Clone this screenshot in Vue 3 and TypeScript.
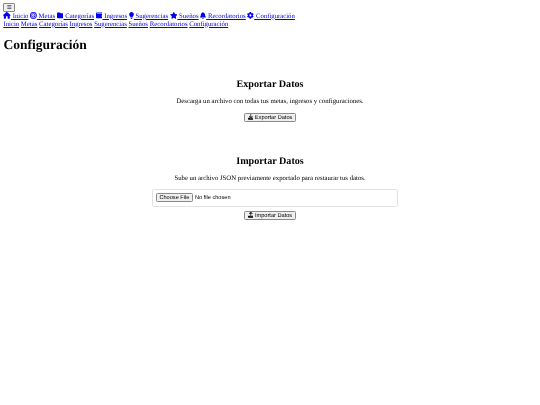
<script setup lang="ts">
interface NavItem { label: string; d: string; box: string }
const nav: NavItem[] = [
  { label: 'Inicio', box: '0 0 576 512', d: 'M575.8 255.5c0 18-15 32.1-32 32.1h-32l.7 160.2c0 2.7-.2 5.4-.5 8.1V472c0 22.1-17.9 40-40 40H456c-1.100 0-2.200 0-3.300-.1-1.400.1-2.800.1-4.200.1H392c-22.100 0-40-17.900-40-40V360c0-17.700-14.300-32-32-32H256c-17.700 0-32 14.300-32 32V472c0 22.100-17.900 40-40 40H104c-22.100 0-40-17.900-40-40V287.600H32c-18 0-32-14-32-32.100 0-9 3-17 10-24L266.400 8c7-7 15-8 22-8s15 2 21 7L564.800 231.500c8 7 12 15 11 24z' },
  { label: 'Metas', box: '0 0 512 512', d: 'M448 256A192 192 0 1 0 64 256a192 192 0 1 0 384 0zM0 256a256 256 0 1 1 512 0A256 256 0 1 1 0 256zm256 96a96 96 0 1 0 0-192 96 96 0 1 0 0 192zm0-256a160 160 0 1 1 0 320 160 160 0 1 1 0-320zm-32 160a32 32 0 1 1 64 0 32 32 0 1 1-64 0z' },
  { label: 'Categorías', box: '0 0 512 512', d: 'M64 480H448c35.300 0 64-28.700 64-64V160c0-35.300-28.700-64-64-64H288c-10.100 0-19.600-4.700-25.600-12.800L243.200 57.600C231.100 41.500 212.100 32 192 32H64C28.700 32 0 60.700 0 96V416c0 35.300 28.700 64 64 64z' },
  { label: 'Ingresos', box: '0 0 512 512', d: 'M64 32C28.700 32 0 60.700 0 96V416c0 35.300 28.700 64 64 64H448c35.300 0 64-28.700 64-64V192c0-35.300-28.700-64-64-64H80c-8.800 0-16-7.200-16-16s7.200-16 16-16H448c17.700 0 32-14.300 32-32s-14.300-32-32-32H64zM416 272a32 32 0 1 1 0 64 32 32 0 1 1 0-64z' },
  { label: 'Sugerencias', box: '0 0 384 512', d: 'M272 384c9.600-31.900 29.500-59.100 49.200-86.200 5.200-7.100 10.400-14.200 15.400-21.400 19.800-28.500 31.400-63 31.400-100.300C368 78.800 289.200 0 192 0S16 78.800 16 176c0 37.300 11.600 71.900 31.400 100.300 5 7.200 10.200 14.300 15.400 21.400 19.800 27.100 39.700 54.400 49.200 86.300H272zM192 512c44.200 0 80-35.800 80-80V416H112v16c0 44.200 35.800 80 80 80z' },
  { label: 'Sueños', box: '0 0 576 512', d: 'M316.900 18C311.600 7 300.400 0 288.100 0s-23.400 7-28.800 18L195 150.300 51.400 171.500c-12 1.800-22 10.200-25.700 21.700s-.7 24.200 7.900 32.700L137.800 329 113.200 474.700c-2 12 3 24.200 12.900 31.300s23 8 33.800 2.300l128.300-68.500 128.300 68.500c10.800 5.700 23.900 4.900 33.800-2.300s14.900-19.300 12.900-31.300L438.500 329 542.700 225.900c8.600-8.500 11.700-21.200 7.900-32.700s-13.700-19.900-25.700-21.700L381.200 150.300 316.900 18z' },
  { label: 'Recordatorios', box: '0 0 448 512', d: 'M224 0c-17.700 0-32 14.300-32 32V51.200C119 66 64 130.600 64 208v18.800c0 47-17.300 92.400-48.500 127.600l-7.400 8.300c-8.400 9.400-10.400 22.900-5.300 34.400S19.400 416 32 416H416c12.600 0 24-7.400 29.200-18.900s3.100-25-5.300-34.400l-7.400-8.300C401.300 319.200 384 273.900 384 226.800V208c0-77.400-55-142-128-156.800V32c0-17.700-14.300-32-32-32zm45.300 493.300c12-12 18.700-28.300 18.700-45.300H224 160c0 17 6.700 33.300 18.700 45.300s28.300 18.700 45.300 18.700 33.300-6.700 45.300-18.700z' },
  { label: 'Configuración', box: '0 0 512 512', d: 'M495.900 166.600c3.200 8.700.5 18.400-6.400 24.600l-43.300 39.400c1.100 8.300 1.700 16.800 1.700 25.400s-.6 17.100-1.700 25.400l43.300 39.400c6.900 6.200 9.600 15.900 6.400 24.600-4.400 11.900-9.700 23.300-15.800 34.300l-4.700 8.100c-6.600 11-14 21.400-22.100 31.200-5.900 7.200-15.700 9.600-24.500 6.800l-55.700-17.700c-13.400 10.300-28.200 18.900-44 25.400l-12.500 57.100c-2 9.100-9 16.300-18.200 17.800-13.800 2.300-28 3.500-42.500 3.500s-28.700-1.200-42.500-3.500c-9.200-1.500-16.200-8.700-18.200-17.800l-12.500-57.100c-15.800-6.500-30.600-15.100-44-25.400L83.100 425.900c-8.800 2.800-18.600.3-24.500-6.800-8.100-9.800-15.500-20.200-22.100-31.200l-4.700-8.100c-6.100-11-11.400-22.400-15.800-34.300-3.200-8.700-.5-18.400 6.400-24.600l43.300-39.400C64.600 273.100 64 264.600 64 256s.6-17.100 1.700-25.400L22.400 191.200c-6.900-6.200-9.600-15.900-6.400-24.600 4.400-11.900 9.700-23.300 15.800-34.300l4.700-8.100c6.600-11 14-21.400 22.100-31.200 5.900-7.200 15.700-9.600 24.500-6.800l55.700 17.700c13.400-10.300 28.200-18.900 44-25.400l12.500-57.100c2-9.100 9-16.300 18.200-17.800C227.300 1.200 241.500 0 256 0s28.700 1.200 42.500 3.500c9.200 1.500 16.200 8.700 18.200 17.800l12.500 57.100c15.800 6.500 30.600 15.100 44 25.400l55.700-17.700c8.800-2.800 18.600-.3 24.500 6.800 8.100 9.800 15.500 20.200 22.100 31.200l4.700 8.100c6.100 11 11.400 22.400 15.800 34.300zM256 336a80 80 0 1 0 0-160 80 80 0 1 0 0 160z' },
]
const plain: string[] = nav.map((n) => n.label)
const downloadD = 'M288 32c0-17.700-14.300-32-32-32s-32 14.300-32 32V274.700l-73.400-73.400c-12.500-12.500-32.800-12.500-45.300 0s-12.500 32.800 0 45.300l128 128c12.500 12.500 32.800 12.500 45.300 0l128-128c12.500-12.500 12.500-32.800 0-45.300s-32.800-12.500-45.300 0L288 274.700V32zM64 352c-35.300 0-64 28.700-64 64v32c0 35.300 28.700 64 64 64H448c35.300 0 64-28.700 64-64V416c0-35.300-28.700-64-64-64H346.500l-45.300 45.300c-25 25-65.500 25-90.500 0L165.500 352H64zm368 56a24 24 0 1 1 0 48 24 24 0 1 1 0-48z'
const uploadD = 'M288 109.300V352c0 17.700-14.300 32-32 32s-32-14.300-32-32V109.300l-73.400 73.400c-12.500 12.500-32.800 12.500-45.300 0s-12.500-32.800 0-45.300l128-128c12.500-12.500 32.800-12.500 45.300 0l128 128c12.500 12.500 12.500 32.800 0 45.300s-32.800 12.500-45.300 0L288 109.300zM64 352H192c0 35.300 28.700 64 64 64s64-28.700 64-64H448c35.300 0 64 28.700 64 64v32c0 35.300-28.700 64-64 64H64c-35.300 0-64-28.700-64-64V416c0-35.300 28.700-64 64-64zM432 456a24 24 0 1 0 0-48 24 24 0 1 0 0 48z'
</script>

<template>
  <div class="page">
    <button class="menu" type="button">☰</button>
    <nav class="line">
      <template v-for="n in nav" :key="n.label">
        <a href="#" class="link"><svg class="ico" :viewBox="n.box" aria-hidden="true"><path :d="n.d" /></svg> {{ n.label }}</a>{{ ' ' }}
      </template>
    </nav>
    <nav class="line">
      <template v-for="p in plain" :key="p">
        <a href="#" class="link">{{ p }}</a>{{ ' ' }}
      </template>
    </nav>
    <h1>Configuración</h1>
    <section class="card">
      <h2>Exportar Datos</h2>
      <p>Descarga un archivo con todas tus metas, ingresos y configuraciones.</p>
      <button class="act" type="button"><svg class="ico" viewBox="0 0 512 512" aria-hidden="true"><path :d="downloadD" /></svg> Exportar Datos</button>
    </section>
    <section class="card second">
      <h2>Importar Datos</h2>
      <p class="tight">Sube un archivo JSON previamente exportado para restaurar tus datos.</p>
      <div class="filewrap"><input class="file" type="file" accept=".json" /></div>
      <button class="act" type="button"><svg class="ico" viewBox="0 0 512 512" aria-hidden="true"><path :d="uploadD" /></svg> Importar Datos</button>
    </section>
  </div>
</template>

<style scoped>
.page {
  padding: 3.4px;
  font-family: "Liberation Serif", serif;
  font-size: 6.75px;
  color: #000;
  text-rendering: geometricPrecision;
  filter: blur(0.15px);
}
.menu {
  display: block;
  height: 8.5px;
  width: 11.5px;
  padding: 0;
  font: 5.6px "DejaVu Sans", sans-serif;
  line-height: 7px;
  background: #efefef;
  border: 0.5px solid #8a8a8a;
  border-radius: 1px;
  color: #000;
}
.line { line-height: 7.75px; }
.link { color: #0000ee; text-decoration: underline; }
.ico { display: inline-block; height: 1em; width: auto; fill: currentColor; vertical-align: -0.125em; }
h1 {
  font-size: 13.5px;
  font-weight: 700;
  margin: 9px 0;
  line-height: 15.5px;
}
.card {
  width: 235px;
  margin: 0 auto;
  padding-top: 17px;
  text-align: center;
}
.second { margin-top: 17px; }
h2 {
  font-size: 10.13px;
  font-weight: 700;
  margin: 0 0 7.5px;
  line-height: 12px;
}
p { margin: 0 0 6.5px; line-height: 8px; }
p.tight { margin-bottom: 5.5px; }
.act {
  font: 5.63px "Liberation Sans", sans-serif;
  text-rendering: geometricPrecision;
  height: 9px;
  padding: 0 2.5px;
  line-height: 8px;
  background: #efefef;
  border: 0.5px solid #8a8a8a;
  border-radius: 1.3px;
  color: #000;
}
.filewrap {
  box-sizing: border-box;
  width: 246px;
  height: 18px;
  margin: 0 0 4px -0.6px;
  padding: 3px;
  border: 0.5px solid #e2e2e2;
  border-radius: 2px;
  text-align: left;
  display: flex;
  align-items: center;
}
.file { font: 5.63px "Liberation Sans", sans-serif; text-rendering: geometricPrecision; color: #000; }
.file::file-selector-button {
  font: 5.63px "Liberation Sans", sans-serif;
  text-rendering: geometricPrecision;
  height: 9px;
  padding: 0 2.5px;
  margin-right: 2px;
  background: #efefef;
  border: 0.5px solid #8a8a8a;
  border-radius: 1.3px;
  color: #000;
}
</style>
